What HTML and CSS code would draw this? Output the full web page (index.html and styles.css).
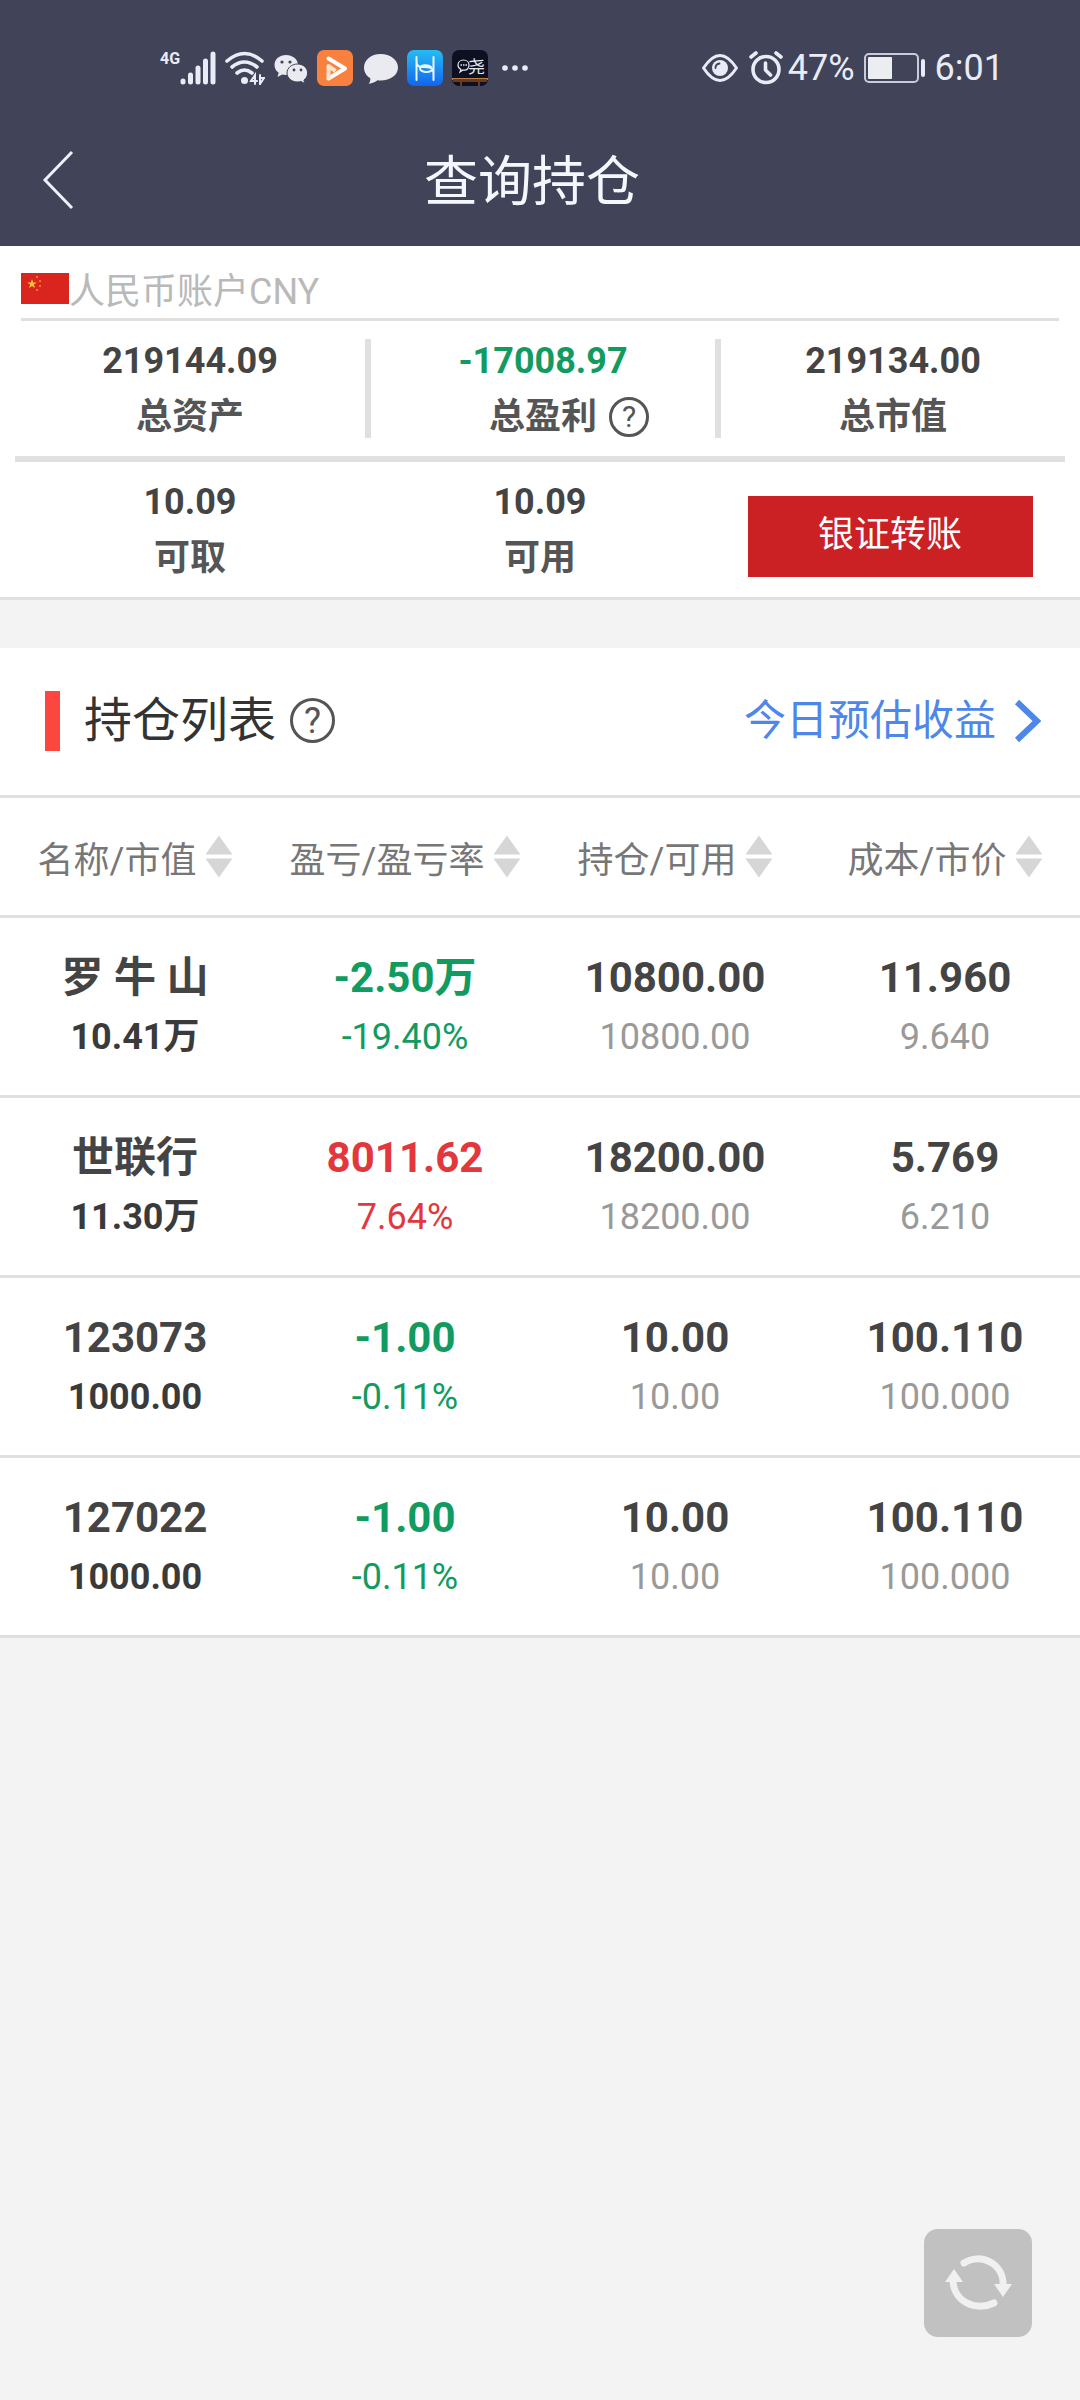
FILE: index.html
```html
<!DOCTYPE html>
<html lang="zh-CN">

<head>
    <meta charset="UTF-8">
    <meta name="viewport" content="width=device-width, initial-scale=1">
    <title>查询持仓</title>
    <link rel="stylesheet" href="styles.css">
</head>

<body>
    <header class="header">
        <div class="status">
            <div class="status-group">
                <div class="signal">
                    <span class="network">4G</span>
                    <svg width="36" height="34" viewBox="0 0 36 34" stroke="#e9ecf7" stroke-width="5" stroke-linecap="round">
                        <path d="M3 31v-1M10.500 31v-7M18 31V17M25.500 31V10M33 31V3" />
                    </svg>
                </div>
                <svg width="40" height="34" viewBox="0 0 40 34" fill="none" stroke="#e9ecf7" stroke-width="3.600" stroke-linecap="round">
                    <path d="M2 10Q19.500-5 37 10M7 16q12.500-10 25 0M12 22q7.500-6 15 0" />
                    <circle cx="19.500" cy="29.500" r="3.500" fill="#e9ecf7" stroke="none" />
                    <path d="M30 33v-9l-4 6h6M35 24v9l4-6h-3" stroke-width="2" />
                </svg>
                <svg width="34" height="34" viewBox="0 0 34 34">
                    <path fill="#e9ebf0" d="M12 4C5.500 4 .5 8.300.5 14c0 3.300 1.600 6 4.200 7.700L3.500 26l4.700-2.500c1.200.3 2.500.5 3.800.5 6.500 0 12-4.300 12-10S18.500 4 12 4z" />
                    <path fill="#e9ebf0" stroke="#414358" stroke-width="1" d="M23.500 13C17.700 13 13 17 13 22s4.700 9 10.500 9c1.200 0 2.300-.2 3.400-.5l4 2-1-3.500c2.300-1.600 3.700-4.100 3.700-7 0-5-4.300-9-10.100-9z" />
                    <g fill="#414358">
                        <circle cx="8" cy="11" r="1.600" />
                        <circle cx="16" cy="11" r="1.600" />
                        <circle cx="20" cy="19" r="1.400" />
                        <circle cx="27" cy="19" r="1.400" />
                    </g>
                </svg>
                <svg width="36" height="36" viewBox="0 0 36 36">
                    <rect width="36" height="36" rx="7" fill="#f8813f" />
                    <path d="M11.500 8.500L28 18.500 11.500 28.500" fill="none" stroke="#fff" stroke-width="4" stroke-linecap="round" stroke-linejoin="round" />
                    <path d="M11.500 29V16l7 5" fill="none" stroke="#ffe0c8" stroke-width="4" stroke-linejoin="round" />
                </svg>
                <svg width="36" height="34" viewBox="0 0 36 34">
                    <path fill="#e9ebf0" d="M18.500 3C9 3 2 9 2 16.500c0 4.500 2.400 8.300 6.300 10.700.2 2.300-.4 4-1.600 5.600 3.700-.4 6.600-1.700 8.800-3.500 1 .1 2 .2 3 .2C28.500 29.500 36 24 36 16.500S28.500 3 18.500 3z" />
                </svg>
                <svg width="36" height="36" viewBox="0 0 36 36">
                    <defs>
                        <linearGradient id="blue" x1="0" y1="0" x2="0" y2="1">
                            <stop offset="0" stop-color="#25bdf3" />
                            <stop offset="1" stop-color="#1265ee" />
                        </linearGradient>
                    </defs>
                    <rect width="36" height="36" rx="7" fill="url(#blue)" />
                    <path d="M9.500 7v23M26.500 7v23M9.500 12c0 5 4 5 8 5s9 0 9 7M24 17c-3-3-11-2-11 1 0 4 7 5 11 3" fill="none" stroke="#e8f6ff" stroke-width="2" stroke-linecap="round" />
                </svg>
                <svg width="36" height="36" viewBox="0 0 36 36">
                    <rect width="36" height="36" rx="7" fill="#0d1020" />
                    <path d="M0 28h36v2H0z" fill="#c07d45" />
                    <path d="M2 30h32v1H2zM9 31v5M27 31v5" fill="#693b22" stroke="#693b22" stroke-width="2" />
                    <path d="M9 19.500l-1 2.500 3-2c4 1 6-2 6-5 0-3-2.500-5-5.500-5S6 12 6 15c0 2 1 3.500 3 4.500z" fill="none" stroke="#e5e7ec" stroke-width="1.200" />
                    <path d="M8.500 15h1.500M11 15h1.500M13.500 15H15" stroke="#e5e7ec" stroke-width="1.500" />
                    <text class="app-char" x="16" y="23">尧</text>
                </svg>
                <svg width="36" height="36" viewBox="0 0 36 36" fill="#e9ecf7">
                    <circle cx="8" cy="18" r="2.800" />
                    <circle cx="18" cy="18" r="2.800" />
                    <circle cx="28" cy="18" r="2.800" />
                </svg>
            </div>
            <div class="status-group">
                <svg width="38" height="34" viewBox="0 0 38 34">
                    <path d="M2.500 17Q19-8 35.500 17 19 42 2.500 17z" fill="none" stroke="#e9ecf7" stroke-width="3" stroke-linejoin="round" />
                    <circle cx="19" cy="17" r="8" fill="#e9ecf7" />
                    <path d="M14.500 17q0-4 4-4.500" fill="none" stroke="#414358" stroke-width="1.800" stroke-linecap="round" />
                </svg>
                <div class="battery">
                    <svg width="36" height="34" viewBox="0 0 36 34" fill="none" stroke="#e9ecf7" stroke-width="3.600" stroke-linecap="round" stroke-linejoin="round">
                        <circle cx="18" cy="18.500" r="13" />
                        <path d="M17.500 12v7l5 5M3 6l5-4M33 6l-5-4" />
                    </svg>
                    <span class="status-text">47%</span>
                </div>
                <svg width="62" height="30" viewBox="0 0 62 30">
                    <rect x="1" y="1" width="53" height="28" rx="4" fill="none" stroke="#c9ccdb" stroke-width="2" />
                    <rect x="4" y="4" width="24" height="22" rx="1" fill="#ebedf0" />
                    <rect x="57" y="6" width="4" height="18" rx="2" fill="#e9ecf7" />
                </svg>
                <span class="status-text">6:01</span>
            </div>
        </div>
        <div class="nav">
            <button class="back" type="button" aria-label="返回">
                <svg width="32" height="60" viewBox="0 0 32 60" fill="none" stroke="#eef1fb" stroke-width="3">
                    <path d="M30 2L3 30l27 28" />
                </svg>
            </button>
            <h1 class="title">查询持仓</h1>
        </div>
    </header>

    <main>
        <section class="assets">
            <div class="account">
                <svg width="48" height="31" viewBox="0 0 48 31">
                    <rect width="48" height="31" fill="#d9251d" />
                    <path d="M11 6l1.200 3.400h3.600l-2.900 2.200 1.100 3.500-3-2.100-3 2.100 1.100-3.500-2.900-2.200h3.600z" fill="#f9c83a" />
                    <g fill="#ee9a3a">
                        <circle cx="16" cy="4" r="1" />
                        <circle cx="19" cy="8" r="1" />
                        <circle cx="19" cy="13" r="1" />
                        <circle cx="16" cy="17" r="1" />
                    </g>
                </svg>
                <span>人民币账户CNY</span>
            </div>
            <div class="stats">
                <div class="stat">
                    <strong>219144.09</strong>
                    <span class="stat-label">总资产</span>
                </div>
                <div class="stat divided">
                    <strong class="down">-17008.97</strong>
                    <span class="stat-label">总盈利<button class="help help-small" type="button" aria-label="总盈利说明">?</button></span>
                </div>
                <div class="stat divided">
                    <strong>219134.00</strong>
                    <span class="stat-label">总市值</span>
                </div>
            </div>
            <div class="stats stats-cash">
                <div class="stat">
                    <strong>10.09</strong>
                    <span class="stat-label">可取</span>
                </div>
                <div class="stat">
                    <strong>10.09</strong>
                    <span class="stat-label">可用</span>
                </div>
                <div class="stat stat-action">
                    <button class="transfer" type="button">银证转账</button>
                </div>
            </div>
        </section>

        <section class="positions">
            <div class="section-head">
                <h2 class="section-title">持仓列表</h2>
                <button class="help" type="button" aria-label="持仓列表说明">?</button>
                <a class="estimate" href="#">今日预估收益
                    <svg width="28" height="44" viewBox="0 0 28 44" fill="none" stroke="#4d87ea" stroke-width="6">
                        <path d="M3 3l20 19L3 41" />
                    </svg>
                </a>
            </div>
            <table class="table">
                <thead>
                    <tr>
                        <th><button class="sort" type="button">名称/市值</button></th>
                        <th><button class="sort" type="button">盈亏/盈亏率</button></th>
                        <th><button class="sort" type="button">持仓/可用</button></th>
                        <th><button class="sort" type="button">成本/市价</button></th>
                    </tr>
                </thead>
                <tbody>
                    <tr>
                        <td><b>罗 牛 山</b><span class="value">10.41万</span></td>
                        <td class="down"><b>-2.50万</b><span>-19.40%</span></td>
                        <td><b>10800.00</b><span>10800.00</span></td>
                        <td><b>11.960</b><span>9.640</span></td>
                    </tr>
                    <tr>
                        <td><b>世联行</b><span class="value">11.30万</span></td>
                        <td class="up"><b>8011.62</b><span>7.64%</span></td>
                        <td><b>18200.00</b><span>18200.00</span></td>
                        <td><b>5.769</b><span>6.210</span></td>
                    </tr>
                    <tr>
                        <td><b>123073</b><span class="value">1000.00</span></td>
                        <td class="down"><b>-1.00</b><span>-0.11%</span></td>
                        <td><b>10.00</b><span>10.00</span></td>
                        <td><b>100.110</b><span>100.000</span></td>
                    </tr>
                    <tr>
                        <td><b>127022</b><span class="value">1000.00</span></td>
                        <td class="down"><b>-1.00</b><span>-0.11%</span></td>
                        <td><b>10.00</b><span>10.00</span></td>
                        <td><b>100.110</b><span>100.000</span></td>
                    </tr>
                </tbody>
            </table>
        </section>
    </main>

    <button class="refresh" type="button" aria-label="刷新">
        <svg width="72" height="72" viewBox="0 0 72 72" fill="none" stroke="#f0f0f0" stroke-width="7">
            <path d="M22 16C39 5 63 17 61 40M52 56C33 65 10 54 11 31" stroke-linecap="round" />
            <path d="M52 37h18l-9 13zM3 35h18l-9-13z" fill="#f0f0f0" stroke="none" />
        </svg>
    </button>
</body>

</html>
```
FILE: styles.css
```css
* {
    box-sizing: border-box;
}

body {
    margin: 0;
    min-height: 100vh;
    background: #f3f3f3;
    color: #444;
    font-family: Roboto, "Noto Sans CJK SC", sans-serif;
    font-size: 36px;
}

button {
    padding: 0;
    border: 0;
    background: none;
    color: inherit;
    font: inherit;
    cursor: pointer;
}

svg {
    display: block;
    flex-shrink: 0;
}

.down {
    color: #129b60;
}

.up {
    color: #e2383d;
}

/* header */
.header {
    background: #414358;
    color: #f5f7ff;
}

.status {
    display: flex;
    justify-content: space-between;
    height: 114px;
    padding: 22px 76px 0 160px;
}

.status-group {
    display: flex;
    align-items: center;
    gap: 9px;
}

.signal {
    display: flex;
    width: 56px;
}

.network {
    width: 20px;
    font-size: 16px;
    font-weight: 700;
    line-height: 16px;
    color: #e9ecf7;
}

.app-char {
    fill: #e5e7ec;
    font-size: 17px;
}

.battery {
    display: flex;
    align-items: center;
    gap: 4px;
}

.status-text {
    color: #e9ecf7;
    line-height: 40px;
}

.nav {
    display: grid;
    grid-template-columns: 104px 1fr 120px;
    align-items: center;
    height: 132px;
}

.back {
    justify-self: start;
    padding-left: 42px;
}

.title {
    margin: 0;
    padding-top: 6px;
    font-size: 54px;
    font-weight: 400;
    line-height: 64px;
    text-align: center;
}

/* assets */
.assets {
    padding: 0 15px;
    background: #fff;
    border-bottom: 3px solid #e0e0e0;
}

.account {
    display: flex;
    align-items: center;
    height: 75px;
    margin: 0 6px;
    padding-top: 12px;
    border-bottom: 3px solid #e0e0e0;
    color: #b9b9b9;
}

.stats {
    display: grid;
    grid-template-columns: repeat(3, 1fr);
    padding: 18px 0;
}

.stats-cash {
    border-top: 6px solid #e0e0e0;
}

.stat {
    display: flex;
    flex-direction: column;
    align-items: center;
    gap: 16px;
    padding: 2px 0 1px;
    line-height: 40px;
}

.divided {
    border-left: 6px solid #e0e0e0;
}

.stat-label {
    display: flex;
    align-items: center;
    height: 40px;
    color: #555;
    font-weight: 700;
}

.stat-action {
    justify-content: center;
}

.transfer {
    width: 285px;
    height: 81px;
    margin-top: 12px;
    padding-bottom: 2px;
    background: #cb2124;
    color: #fff;
}

.help {
    width: 45px;
    height: 45px;
    border: 3px solid #555;
    border-radius: 50%;
    color: #555;
    font-weight: 400;
    line-height: 38px;
    text-align: center;
}

/* kept out of the centring of its label */
.help-small {
    width: 40px;
    height: 40px;
    margin: 0 -52px 0 12px;
    font-size: 30px;
    line-height: 34px;
}

/* positions */
.positions {
    margin-top: 48px;
    background: #fff;
}

.section-head {
    display: flex;
    align-items: center;
    height: 150px;
    padding: 0 38px 2px 45px;
    border-bottom: 3px solid #e0e0e0;
}

.section-title {
    margin: 0 14px 0 0;
    padding-left: 24px;
    border-left: 15px solid #fd4640;
    color: #333;
    font-size: 48px;
    font-weight: 400;
    line-height: 60px;
}

.estimate {
    display: flex;
    align-items: center;
    gap: 18px;
    margin-left: auto;
    color: #4d87ea;
    font-size: 42px;
    line-height: 60px;
    text-decoration: none;
}

.table {
    width: 100%;
    border-spacing: 0;
    table-layout: fixed;
    text-align: center;
}

.table th,
.table td {
    padding: 0;
    border-bottom: 3px solid #e0e0e0;
}

.table th {
    height: 120px;
    color: #777;
    font-weight: 400;
}

.sort {
    display: inline-flex;
    align-items: center;
    gap: 9px;
    white-space: nowrap;
    vertical-align: middle;
}

.sort::after {
    content: "";
    width: 27px;
    height: 42px;
    background: #d6d6d6;
    clip-path: polygon(50% 0, 100% 45%, 0 45%, 0 55%, 100% 55%, 50% 100%, 0 55%, 0 45%);
}

.table td {
    height: 180px;
}

.table td b,
.table td span {
    display: block;
}

.table td b {
    font-size: 42px;
    line-height: 60px;
}

.table td span {
    color: #999;
    line-height: 58px;
}

.table .value {
    color: #3a3a3a;
    font-weight: 700;
}

.table .down span,
.table .up span {
    color: inherit;
}

.refresh {
    position: fixed;
    right: 48px;
    bottom: 63px;
    display: flex;
    align-items: center;
    justify-content: center;
    width: 108px;
    height: 108px;
    border-radius: 14px;
    background: #c1c1c1;
}
```
